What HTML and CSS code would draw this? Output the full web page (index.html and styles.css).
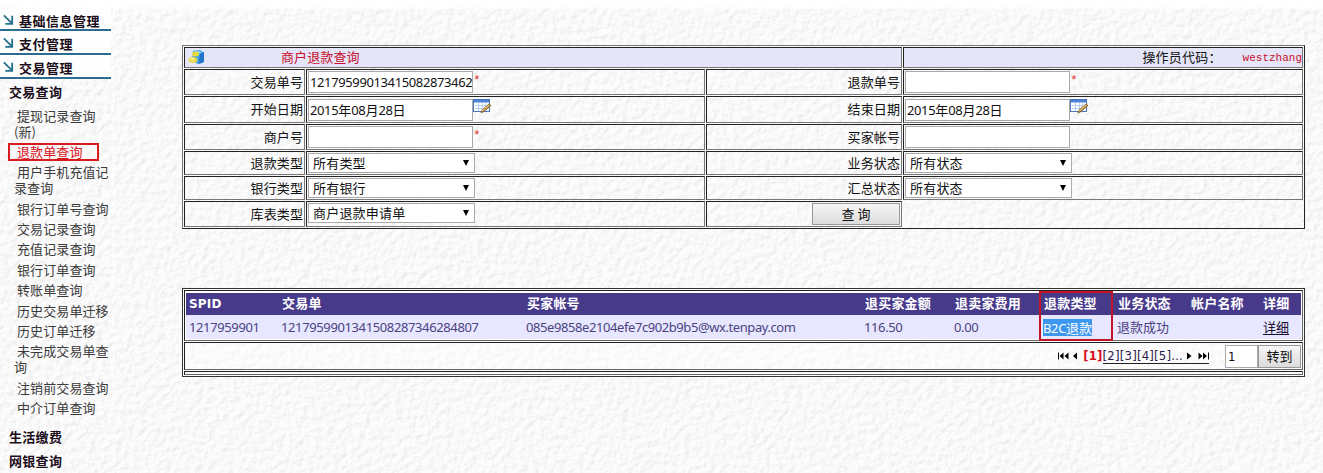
FILE: index.html
```
<!DOCTYPE html>
<html lang="zh-CN">
<head>
<meta charset="utf-8">
<title>商户退款查询</title>
<link rel="stylesheet" href="styles.css">
</head>
<body>
<svg class="paper" width="1323" height="473" aria-hidden="true">
  <filter id="emboss" x="0" y="0" width="100%" height="100%" color-interpolation-filters="sRGB">
    <feTurbulence type="fractalNoise" baseFrequency="0.16" numOctaves="3" seed="8"/>
    <feDiffuseLighting surfaceScale="0.85" diffuseConstant="1.13" lighting-color="#fff">
      <feDistantLight azimuth="225" elevation="58"/>
    </feDiffuseLighting>
  </filter>
  <rect width="1323" height="473" filter="url(#emboss)"/>
</svg>
<div class="topband"></div>
<div class="page">
  <nav class="side">
    <div class="group"><svg class="arrow" viewBox="0 0 12 12"><path d="M1 1.500 9.500 10M10 2v8.800H2.500"/></svg>基础信息管理</div>
    <div class="group"><svg class="arrow" viewBox="0 0 12 12"><path d="M1 1.500 9.500 10M10 2v8.800H2.500"/></svg>支付管理</div>
    <div class="group"><svg class="arrow" viewBox="0 0 12 12"><path d="M1 1.500 9.500 10M10 2v8.800H2.500"/></svg>交易管理</div>
    <div class="head first">交易查询</div>
    <ul class="items">
      <li>提现记录查询<br><span class="wrap">(新)</span></li>
      <li class="current">退款单查询</li>
      <li>用户手机充值记<br><span class="wrap">录查询</span></li>
      <li>银行订单号查询</li>
      <li>交易记录查询</li>
      <li>充值记录查询</li>
      <li>银行订单查询</li>
      <li>转账单查询</li>
      <li>历史交易单迁移</li>
      <li>历史订单迁移</li>
      <li>未完成交易单查<br><span class="wrap">询</span></li>
      <li>注销前交易查询</li>
      <li>中介订单查询</li>
    </ul>
    <div class="head">生活缴费</div>
    <div class="head">网银查询</div>
  </nav>
  <main class="main">
    <section class="form">
      <div class="cell title">
        <svg class="logo" viewBox="0 0 17 16"><path d="M5 2l7-1 4 3v9l-6 2-6-3z" fill="#3f9fe8"/><path d="M12 4l4-1v10l-5 2z" fill="#2274c8"/><path d="M5 3l6-1 3 2-5 1z" fill="#9bd8f5"/><ellipse cx="7.500" cy="5" rx="3.500" ry="2.500" fill="#e3dc3c"/><ellipse cx="5" cy="11" rx="4.500" ry="3" fill="#e9d94c"/><ellipse cx="4.500" cy="10" rx="2" ry="1" fill="#fbf7a8"/></svg>
        <span>商户退款查询</span>
      </div>
      <div class="cell operator">操作员代码：<span>westzhang</span></div>

      <div class="cell label">交易单号</div>
      <div class="cell"><div class="input"><span class="num">12179599013415082873462</span></div><span class="star">*</span></div>
      <div class="cell label">退款单号</div>
      <div class="cell"><div class="input"></div><span class="star">*</span></div>

      <div class="cell label">开始日期</div>
      <div class="cell"><div class="input low"><span class="num">2015</span>年<span class="num">08</span>月<span class="num">28</span>日</div><svg class="cal" viewBox="0 0 19 17"><rect x=".5" y="1.500" width="16" height="12" fill="#fff" stroke="#4c78ba"/><path d="M1 2h15v2.500H1z" fill="#4a83d8"/><path d="M2 7.500h13M2 10.500h12M5.500 5v8M9.500 5v8M13 5v8" stroke="#b5cfed" fill="none"/><path d="M8 15l1-3 7-6 2 1.500-7 6z" fill="#c28b3d" stroke="#6e5226" stroke-width=".7"/><path d="M9 13l7-6" stroke="#f1d18a"/></svg></div>
      <div class="cell label">结束日期</div>
      <div class="cell"><div class="input low"><span class="num">2015</span>年<span class="num">08</span>月<span class="num">28</span>日</div><svg class="cal" viewBox="0 0 19 17"><rect x=".5" y="1.500" width="16" height="12" fill="#fff" stroke="#4c78ba"/><path d="M1 2h15v2.500H1z" fill="#4a83d8"/><path d="M2 7.500h13M2 10.500h12M5.500 5v8M9.500 5v8M13 5v8" stroke="#b5cfed" fill="none"/><path d="M8 15l1-3 7-6 2 1.500-7 6z" fill="#c28b3d" stroke="#6e5226" stroke-width=".7"/><path d="M9 13l7-6" stroke="#f1d18a"/></svg></div>

      <div class="cell label">商户号</div>
      <div class="cell"><div class="input"></div><span class="star">*</span></div>
      <div class="cell label">买家帐号</div>
      <div class="cell"><div class="input"></div></div>

      <div class="cell label">退款类型</div>
      <div class="cell"><div class="select">所有类型<i></i></div></div>
      <div class="cell label">业务状态</div>
      <div class="cell"><div class="select">所有状态<i></i></div></div>

      <div class="cell label">银行类型</div>
      <div class="cell"><div class="select">所有银行<i></i></div></div>
      <div class="cell label">汇总状态</div>
      <div class="cell"><div class="select">所有状态<i></i></div></div>

      <div class="cell label">库表类型</div>
      <div class="cell"><div class="select">商户退款申请单<i></i></div></div>
      <div class="cell action"><button class="btn query">查 询</button></div>
    </section>

    <section class="results">
      <div class="box data">
        <div class="row th"><span>SPID</span><span>交易单</span><span>买家帐号</span><span>退买家金额</span><span>退卖家费用</span><span>退款类型</span><span>业务状态</span><span>帐户名称</span><span>详细</span></div>
        <div class="row td"><span class="num">1217959901</span><span class="num">1217959901341508287346284807</span><span class="num mail">085e9858e2104efe7c902b9b5@wx.tenpay.com</span><span class="num">116.50</span><span class="num">0.00</span><span><mark><b class="num">B2C</b>退款</mark></span><span>退款成功</span><span></span><span><a class="detail">详细</a></span></div>
        <div class="focus"></div>
      </div>
      <div class="box pager">
        <svg class="first-page" viewBox="0 0 11 8"><path d="M0 .5h1v7H0zM5.500 .5v7L1.500 4zM10.500 .5v7L6.500 4z"/></svg>
        <svg class="prev" viewBox="0 0 4 8"><path d="M4 .5v7L0 4z"/></svg>
        <b class="now">[1]</b>
        <span class="links"><span class="nums">[2][3][4][5]...</span><svg class="next" viewBox="0 0 5 8"><path d="M0 .5v7L4.500 4z"/></svg><svg class="last-page" viewBox="0 0 11 8"><path d="M.5 .5v7l4-3.500zM5 .5v7l4-3.500zM10 .5h1v7h-1z"/></svg></span>
        <div class="goto">1</div><button class="btn">转到</button>
      </div>
      <div class="box"></div>
    </section>
  </main>
</div>
</body>
</html>
```
FILE: styles.css
```
*, *::after { box-sizing: border-box; }
body {
  margin: 0;
  width: 1323px;
  height: 473px;
  overflow: hidden;
  position: relative;
  background: #fcfcfc;
  font: 13px/16px "Noto Sans CJK SC", "Noto Sans", sans-serif;
  color: #111;
}
.paper { position: absolute; left: 0; top: 0; z-index: -2; opacity: .3; }
.topband { position: absolute; left: 0; top: 0; width: 100%; height: 9px; background: linear-gradient(#fff 5px, #fff8); z-index: -1; }
.page { display: flex; height: 473px; }

.side { width: 114px; padding-top: 9px; border-right: 1px solid #ffffffb0; }
.group {
  width: 111px;
  height: 24px;
  padding: 3px 0 0 3px;
  display: flex;
  align-items: center;
  font-weight: bold;
  letter-spacing: .5px;
  border-bottom: 2px solid #2c6c90;
  background: #fffc;
  color: #1a0c18;
}
.group:first-child { height: 22px; }
.arrow { width: 11px; height: 11px; margin: -2px 5px 0 0; fill: none; stroke: #26718f; stroke-width: 2; }
.head { height: 24px; line-height: 24px; padding-left: 9px; font-weight: bold; letter-spacing: .3px; color: #1a0c18; }
.head.first { height: 28.500px; line-height: 26px; }
.items { list-style: none; margin: 0; padding: 0 0 4px; color: #3a3a3a; }
.items li { padding: 0 0 4.400px 17px; white-space: nowrap; letter-spacing: .1px; }
.wrap { margin-left: -3px; }
.items .current { position: relative; color: #d8141c; }
.items .current::after { content: ""; position: absolute; left: 8px; top: -1px; width: 91px; height: 18px; border: 2px solid #d81b1e; }

.main { padding: 45px 0 0 68px; }
.form {
  display: grid;
  grid-template-columns: 121px 399px 196px 400px;
  grid-template-rows: 21px 26px 27px 26px 24px 24px 26px;
  gap: 1px;
  width: 1123px;
  padding: 1px;
  border: 1px solid;
  border-color: #777 #222 #222 #777;
}
.cell {
  display: flex;
  align-items: flex-start;
  padding: 1px;
  border: 1px solid;
  border-color: #222 #777 #777 #222;
}
.label { justify-content: flex-end; align-items: center; letter-spacing: .1px; padding: 0 1px 1px 0; }
.title { grid-column: 1 / 4; background: #e4e5f6; align-items: center; color: #c8102e; padding: 0 0 2px 3px; }
.title span { margin-left: 76px; letter-spacing: .1px; }
.logo { width: 17px; height: 16px; }
.operator { background: #e4e5f6; justify-content: flex-end; align-items: center; padding: 0 0 1px; letter-spacing: .2px; }
.operator span { margin-left: 21px; font: 11px/16px "Liberation Mono", monospace; color: #c8102e; letter-spacing: 0; padding-top: 2px; }
.num { font-family: "Noto Sans", sans-serif; letter-spacing: -.38px; font-weight: normal; }
.input { width: 165px; height: 22px; padding: 1px 0 0 1px; line-height: 18px; background: #fff; border: 1px solid #aaa; white-space: nowrap; overflow: hidden; }
.input.low { margin-top: 1px; }
.star { color: #d33; font: 13px/20px "Liberation Mono", monospace; }
.cal { width: 19px; height: 17px; }
.select { display: flex; align-items: center; width: 167px; height: 20px; padding: 0 5px 0 4px; background: #fff; border: 1px solid #aaa; letter-spacing: .2px; }
.select i { margin-left: auto; border: 3px solid transparent; border-top: 6px solid #000; border-bottom: 0; }
.btn { margin: 0; border: 1px solid #999; background: linear-gradient(#f6f6f6, #dcdcdc); font: inherit; color: #111; padding: 0; }
.action { justify-content: flex-end; }
.query { width: 88px; height: 22px; }

.results { width: 1123px; margin-top: 59px; padding: 1px; display: grid; grid-template-rows: 51px 28px 4px; gap: 1px; border: 1px solid #333; background: #fff6; }
.box { border: 1px solid; border-color: #222 #666 #666 #222; }
.data { position: relative; padding: 2px 1px 1px; background: #fff; }
.row { display: grid; grid-template-columns: 93px 245px 338px 90px 89px 74px 73px 73px 1fr; align-items: center; padding-left: 3px; white-space: nowrap; }
.th { height: 22px; background: #483a8b; color: #fff; font-weight: bold; font-family: "DejaVu Sans", "Noto Sans CJK SC", sans-serif; letter-spacing: .2px; }
.th span:first-child { font-size: 12px; }
.td { height: 24px; background: #e7e7ff; color: #4c4380; }
.td > span { margin-left: -1px; }
.td > span:first-child, .td > span:last-child { margin-left: 0; }
.td mark { background: #3b97f0; color: #fff; display: inline-block; height: 17px; line-height: 17px; }
.td .mail { letter-spacing: -.42px; }
.detail { color: #1a1030; text-decoration: underline; text-underline-offset: 2px; }
.th span:last-child, .detail { position: relative; left: -1px; }
.focus { position: absolute; left: 854px; top: 0; width: 74px; height: 50px; border: 2px solid #c3142a; }
.pager { display: flex; align-items: center; justify-content: flex-end; padding: 0 1px; font-family: "DejaVu Sans Condensed", "DejaVu Sans", sans-serif; }
.first-page, .last-page { width: 11px; height: 8px; }
.prev { width: 4px; height: 8px; margin: 0 6px 0 4px; }
.now { color: #d8101c; letter-spacing: .2px; }
.links { display: flex; align-items: center; height: 15px; border-bottom: 1px solid #222; }
.nums { color: #2b1a4c; letter-spacing: .2px; }
.next { width: 5px; height: 8px; margin: 0 6px 0 4px; }
.goto { width: 33px; height: 23px; margin-left: 16px; padding-left: 2px; line-height: 22px; background: #fff; border: 1px solid #aaa; }
.pager .btn { width: 43px; height: 23px; font-family: "Noto Sans CJK SC", sans-serif; }
```
